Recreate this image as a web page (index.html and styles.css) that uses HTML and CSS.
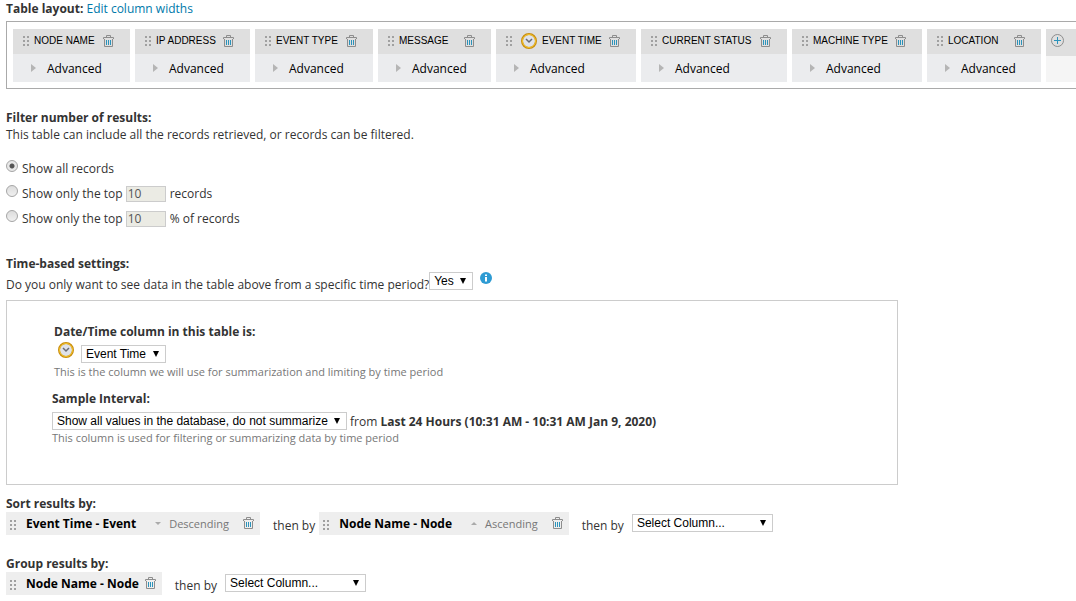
FILE: index.html
```
<!DOCTYPE html>
<html lang="en">
<head>
  <meta charset="UTF-8" />
  <meta name="viewport" content="width=device-width, initial-scale=1.0"/>
  <title>Edit Custom Table</title>
  <link rel="stylesheet" href="styles.css">
</head>
<body>
  <!-- shared icons -->
  <svg class="sprite" aria-hidden="true">
    <symbol id="grip" viewBox="0 0 6 10">
      <path d="M0 0h2v2H0zM4 0h2v2H4zM0 4h2v2H0zM4 4h2v2H4zM0 8h2v2H0zM4 8h2v2H4z" fill="#a0a0a0"/>
    </symbol>
    <symbol id="trash" viewBox="0 0 11 12">
      <path d="M3.5 2V.5h4V2M.5 4V2.5h10V4M1.5 4v7.500h8V4" fill="none" stroke="#8d8d8d"/>
      <path d="M3.500 5v5M5.500 5v5M7.500 5v5" fill="none" stroke="#2b93bb"/>
    </symbol>
    <symbol id="clock" viewBox="0 0 16 16">
      <circle cx="8" cy="8" r="7" fill="#dfe2ea" stroke="#c98d10" stroke-width="2"/>
      <circle cx="8" cy="8" r="6.500" fill="none" stroke="#f3c52c" stroke-width="1"/>
      <path d="M5 6l3 3 3-3" fill="none" stroke="#686b74" stroke-width="1.500"/>
    </symbol>
  </svg>

  <div class="title"><b>Table layout:</b> <a href="#">Edit column widths</a></div>
  <div class="layout">
    <div class="column">
      <div class="head"><svg class="grip"><use href="#grip"/></svg><span>NODE NAME</span><button class="icon" aria-label="Delete Node Name"><svg class="trash"><use href="#trash"/></svg></button></div>
      <button class="advanced">Advanced</button>
    </div>
    <div class="column">
      <div class="head"><svg class="grip"><use href="#grip"/></svg><span>IP ADDRESS</span><button class="icon" aria-label="Delete IP Address"><svg class="trash"><use href="#trash"/></svg></button></div>
      <button class="advanced">Advanced</button>
    </div>
    <div class="column">
      <div class="head"><svg class="grip"><use href="#grip"/></svg><span>EVENT TYPE</span><button class="icon" aria-label="Delete Event Type"><svg class="trash"><use href="#trash"/></svg></button></div>
      <button class="advanced">Advanced</button>
    </div>
    <div class="column">
      <div class="head"><svg class="grip"><use href="#grip"/></svg><span>MESSAGE</span><button class="icon" aria-label="Delete Message"><svg class="trash"><use href="#trash"/></svg></button></div>
      <button class="advanced">Advanced</button>
    </div>
    <div class="column">
      <div class="head"><svg class="grip"><use href="#grip"/></svg><svg class="clock"><use href="#clock"/></svg><span>EVENT TIME</span><button class="icon" aria-label="Delete Event Time"><svg class="trash"><use href="#trash"/></svg></button></div>
      <button class="advanced">Advanced</button>
    </div>
    <div class="column">
      <div class="head"><svg class="grip"><use href="#grip"/></svg><span>CURRENT STATUS</span><button class="icon" aria-label="Delete Current Status"><svg class="trash"><use href="#trash"/></svg></button></div>
      <button class="advanced">Advanced</button>
    </div>
    <div class="column">
      <div class="head"><svg class="grip"><use href="#grip"/></svg><span>MACHINE TYPE</span><button class="icon" aria-label="Delete Machine Type"><svg class="trash"><use href="#trash"/></svg></button></div>
      <button class="advanced">Advanced</button>
    </div>
    <div class="column">
      <div class="head"><svg class="grip"><use href="#grip"/></svg><span>LOCATION</span><button class="icon" aria-label="Delete Location"><svg class="trash"><use href="#trash"/></svg></button></div>
      <button class="advanced">Advanced</button>
    </div>
    <div class="column add">
      <button class="add-button" aria-label="Add column">
        <svg width="13" height="13" viewBox="0 0 13 13"><circle cx="6.500" cy="6.500" r="6" fill="none" stroke="#8d8d8d"/><path d="M6.500 3v7M3 6.500h7" stroke="#2b93bb"/></svg>
      </button>
    </div>
  </div>

  <section class="filter">
    <b>Filter number of results:</b>
    <div>This table can include all the records retrieved, or records can be filtered.</div>
    <div class="options">
      <div class="option"><input type="radio" name="limit" id="all" checked><label for="all">Show all records</label></div>
      <div class="option"><input type="radio" name="limit" id="top"><label for="top">Show only the top</label><input type="text" class="count" value="10" aria-label="Number of records" disabled><span>records</span></div>
      <div class="option"><input type="radio" name="limit" id="percent"><label for="percent">Show only the top</label><input type="text" class="count" value="10" aria-label="Percent of records" disabled><span>% of records</span></div>
    </div>
  </section>

  <section class="time">
    <b>Time-based settings:</b>
    <div class="question">
      <label for="period">Do you only want to see data in the table above from a specific time period?</label>
      <span class="select"><select id="period"><option>Yes</option><option>No</option></select></span>
      <svg class="info" viewBox="0 0 12 12"><circle cx="6" cy="6" r="6" fill="#2e9bd3"/><path d="M5 2.500h2v1.500H5zM5 5h2v4.500H5z" fill="#fff"/></svg>
    </div>
    <div class="panel">
      <div class="field date">
        <label for="datetime"><b>Date/Time column in this table is:</b></label>
        <div class="picker">
          <svg class="clock"><use href="#clock"/></svg>
          <span class="select"><select id="datetime"><option>Event Time</option></select></span>
        </div>
        <div class="hint">This is the column we will use for summarization and limiting by time period</div>
      </div>
      <div class="field">
        <label for="interval"><b>Sample Interval:</b></label>
        <div class="interval">
          <span class="select"><select id="interval"><option>Show all values in the database, do not summarize</option></select></span>
          <span>from <b>Last 24 Hours (10:31 AM - 10:31 AM Jan 9, 2020)</b></span>
        </div>
        <div class="hint">This column is used for filtering or summarizing data by time period</div>
      </div>
    </div>
  </section>

  <section class="sort">
    <b>Sort results by:</b>
    <div class="chips">
      <div class="chip sorted"><svg class="grip"><use href="#grip"/></svg><b>Event Time - Event</b><button class="order down">Descending</button><button class="icon" aria-label="Remove Event Time"><svg class="trash"><use href="#trash"/></svg></button></div>
      <span class="then">then by</span>
      <div class="chip sorted"><svg class="grip"><use href="#grip"/></svg><b>Node Name - Node</b><button class="order up">Ascending</button><button class="icon" aria-label="Remove Node Name"><svg class="trash"><use href="#trash"/></svg></button></div>
      <label class="then" for="sort-by">then by</label>
      <span class="select wide"><select id="sort-by"><option>Select Column...</option></select></span>
    </div>
  </section>

  <section class="group">
    <b>Group results by:</b>
    <div class="chips">
      <div class="chip"><svg class="grip"><use href="#grip"/></svg><b>Node Name - Node</b><button class="icon" aria-label="Remove group"><svg class="trash"><use href="#trash"/></svg></button></div>
      <label class="then" for="group-by">then by</label>
      <span class="select wide"><select id="group-by"><option>Select Column...</option></select></span>
    </div>
  </section>
</body>
</html>
```
FILE: styles.css
```
* {
  box-sizing: border-box;
}
body {
  margin: 0;
  padding-left: 6px;
  background: #fff;
  color: #333;
  font: 12px/17px "Open Sans", Arial, sans-serif;
  overflow-x: hidden;
}
a {
  color: #0079aa;
  text-decoration: none;
}
button {
  border: none;
  padding: 0;
  background: none;
  font: inherit;
  cursor: pointer;
}
svg {
  display: block;
  flex: none;
}
.sprite {
  position: absolute;
  width: 0;
  height: 0;
}
.grip {
  width: 6px;
  height: 10px;
}
.trash {
  width: 11px;
  height: 12px;
}
.clock {
  width: 16px;
  height: 16px;
}

/* table layout */
.layout {
  display: grid;
  grid-template-columns: 117px 115px 118px 113px 140px 146px 130px 114px minmax(30px, 1fr);
  gap: 5px;
  margin-top: 4px;
  padding: 7px 0 6px 6px;
  border: 1px solid #aaa;
  border-right: none;
  white-space: nowrap;
}
.column {
  background: #ebecee;
}
.head {
  display: flex;
  align-items: center;
  gap: 5px;
  height: 25px;
  padding: 0 16px 1px 10px;
  background: #dfdfdf;
  color: #000;
  font: 10px/12px "Liberation Sans", Arial, sans-serif;
}
.head .clock {
  margin-left: 4px;
}
.head .icon {
  margin-left: auto;
}
.advanced {
  display: flex;
  align-items: center;
  gap: 11px;
  width: 100%;
  height: 28px;
  padding-left: 18px;
  color: #000;
}
.advanced::before {
  content: "";
  border: 4px solid transparent;
  border-left: 5px solid #b5b5b5;
  border-right: none;
}
.add {
  background: #f5f5f5;
}
.add-button {
  display: block;
  width: 100%;
  height: 27px;
  padding: 0 0 4px 5px;
  background: #dfdfdf;
}

/* filter */
.filter {
  margin-top: 20px;
}
.options {
  margin-top: 13px;
}
.option {
  display: flex;
  align-items: center;
  height: 25px;
}
.option label {
  margin-right: 3px;
}
input[type=radio] {
  appearance: none;
  width: 12px;
  height: 12px;
  margin: 0 4px 5px 0;
  border: 1px solid #a5a5a5;
  border-radius: 50%;
  background: linear-gradient(#dcdcdc, #f0f0f0);
}
input[type=radio]:checked {
  background: radial-gradient(circle, #555 0 2px, #e8e8e8 3px);
}
.count {
  width: 40px;
  height: 16px;
  margin-right: 4px;
  padding: 0 1px;
  border: 1px solid #ccc;
  background: #ebebe4;
  color: #545454;
  font: inherit;
}

/* drop-downs */
.select {
  position: relative;
  display: inline-flex;
}
.select select {
  appearance: none;
  height: 18px;
  padding: 0 18px 0 4px;
  border: 1px solid #ccc;
  border-radius: 0;
  background: #fff;
  color: #000;
  font: 12px/16px "Liberation Sans", Arial, sans-serif;
}
.select::after {
  content: "";
  position: absolute;
  top: 6px;
  right: 7px;
  border: 3px solid transparent;
  border-top: 6px solid #000;
  border-bottom: none;
  pointer-events: none;
}
.wide {
  margin-bottom: 1px;
}
.wide select {
  width: 141px;
}

/* time settings */
.time {
  margin-top: 24px;
}
.question {
  display: flex;
  align-items: flex-start;
}
.question label {
  padding-top: 4px;
}
.info {
  width: 12px;
  height: 12px;
  margin-left: 7px;
}
.panel {
  max-width: 892px;
  min-height: 185px;
  margin-top: 7px;
  padding: 22px 45px;
  border: 1px solid #ccc;
}
.date {
  margin-bottom: 10px;
  padding-left: 2px;
}
.field label {
  display: block;
}
.picker {
  display: flex;
  gap: 7px;
  padding: 2px 0 1px 4px;
}
.picker .select {
  padding-top: 3px;
}
.picker .select::after {
  top: 9px;
}
.interval {
  display: flex;
  align-items: center;
  gap: 3px;
  padding-top: 5px;
}
.hint {
  color: #777;
  font-size: 11px;
  line-height: 16px;
}

/* sort and group */
.sort {
  margin-top: 10px;
}
.group {
  margin-top: 20px;
}
.chips {
  display: flex;
  align-items: center;
}
.chip {
  display: flex;
  align-items: center;
  height: 23px;
  padding: 0 6px 1px 4px;
  background: #eee;
  color: #000;
}
.chip .grip {
  margin-top: 4px;
}
.chip b {
  margin: 0 6px 0 10px;
}
.sorted b {
  margin-right: 19px;
}
.order {
  display: flex;
  align-items: center;
  gap: 8px;
  margin-right: 14px;
  color: #777;
  font-size: 11px;
}
.order::before {
  content: "";
  border: 3px solid transparent;
}
.down::before {
  border-top-color: #aaa;
  border-bottom: none;
}
.up::before {
  border-bottom-color: #aaa;
  border-top: none;
}
.then {
  margin: 4px 4px 0 13px;
}
.then + .select {
  margin-left: 4px;
}
```
